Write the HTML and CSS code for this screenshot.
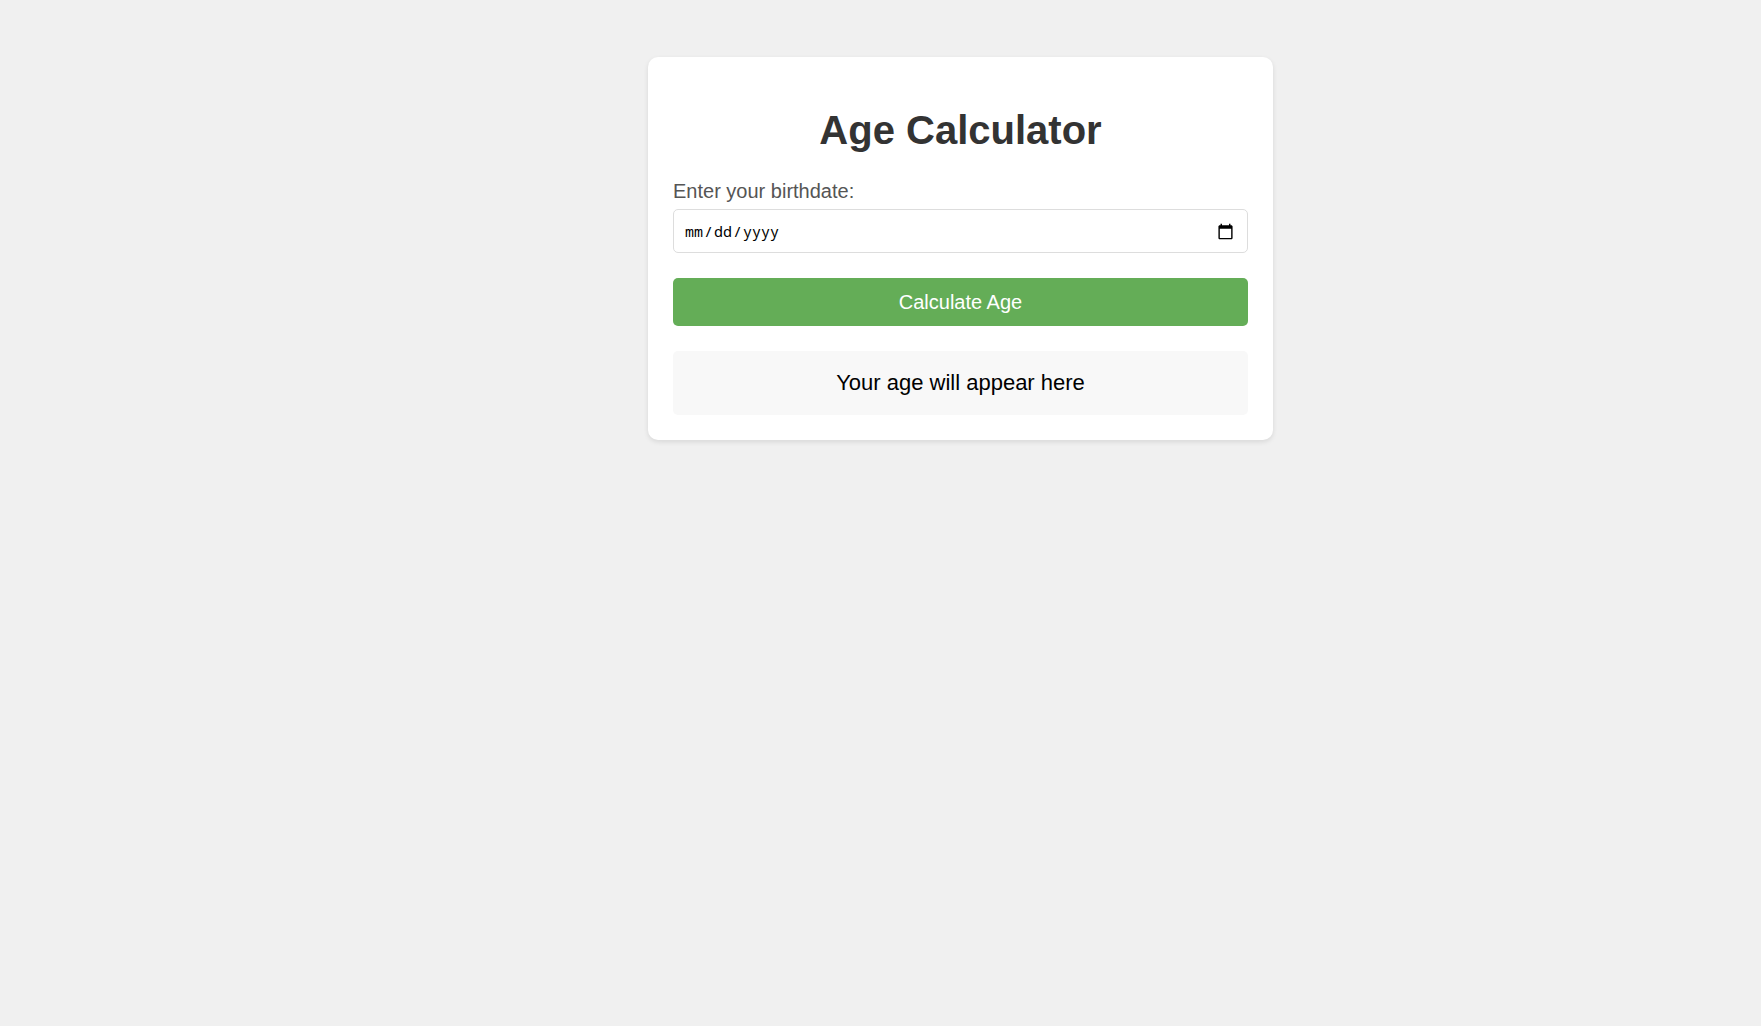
FILE: index.html
```html
<!DOCTYPE html>
<html lang="en">
<head>
<meta charset="utf-8">
<title>Age Calculator</title>
<link rel="stylesheet" href="styles.css">
</head>
<body>
<main class="container">
  <h1 class="title">Age Calculator</h1>
  <form class="form">
    <label class="label" for="birthdate">Enter your birthdate:</label>
    <input class="date" type="date" id="birthdate">
    <button class="button" type="button">Calculate Age</button>
  </form>
  <output class="result" for="birthdate">Your age will appear here</output>
</main>
</body>
</html>
```

FILE: styles.css
```css
* {
  box-sizing: border-box;
}

body {
  margin: 0;
  padding: 57px 20px 20px 180px;
  background: #f0f0f0;
  font-family: Arial, "Liberation Sans", sans-serif;
}

.container {
  max-width: 625px;
  margin: 0 auto;
  padding: 25px;
  background: #fff;
  border-radius: 10px;
  box-shadow: 0 2px 5px rgba(0, 0, 0, 0.1);
}

.title {
  margin: 24px 0 25px;
  color: #333;
  font-size: 40px;
  line-height: 48px;
  text-align: center;
}

.form {
  display: flex;
  flex-direction: column;
}

.label {
  margin-bottom: 6px;
  color: #555;
  font-size: 20px;
  line-height: 24px;
}

.date {
  height: 44px;
  margin-bottom: 25px;
  padding: 10px 13px 10px 10px;
  border: 1px solid #ddd;
  border-radius: 5px;
  background: #fff;
  color: #000;
  font-family: "Noto Sans Mono", "DejaVu Sans Mono", monospace;
  font-size: 15px;
}

.date::-webkit-calendar-picker-indicator {
  width: 17px;
  height: 17px;
  padding: 0;
  background-size: 17px 17px;
}

.button {
  height: 48px;
  margin-bottom: 25px;
  border: 0;
  border-radius: 5px;
  background: #64ad57;
  color: #fff;
  font-family: inherit;
  font-size: 20px;
}

.result {
  display: block;
  padding: 19px;
  border-radius: 5px;
  background: #f8f8f8;
  font-size: 22px;
  line-height: 26px;
  text-align: center;
}
```
